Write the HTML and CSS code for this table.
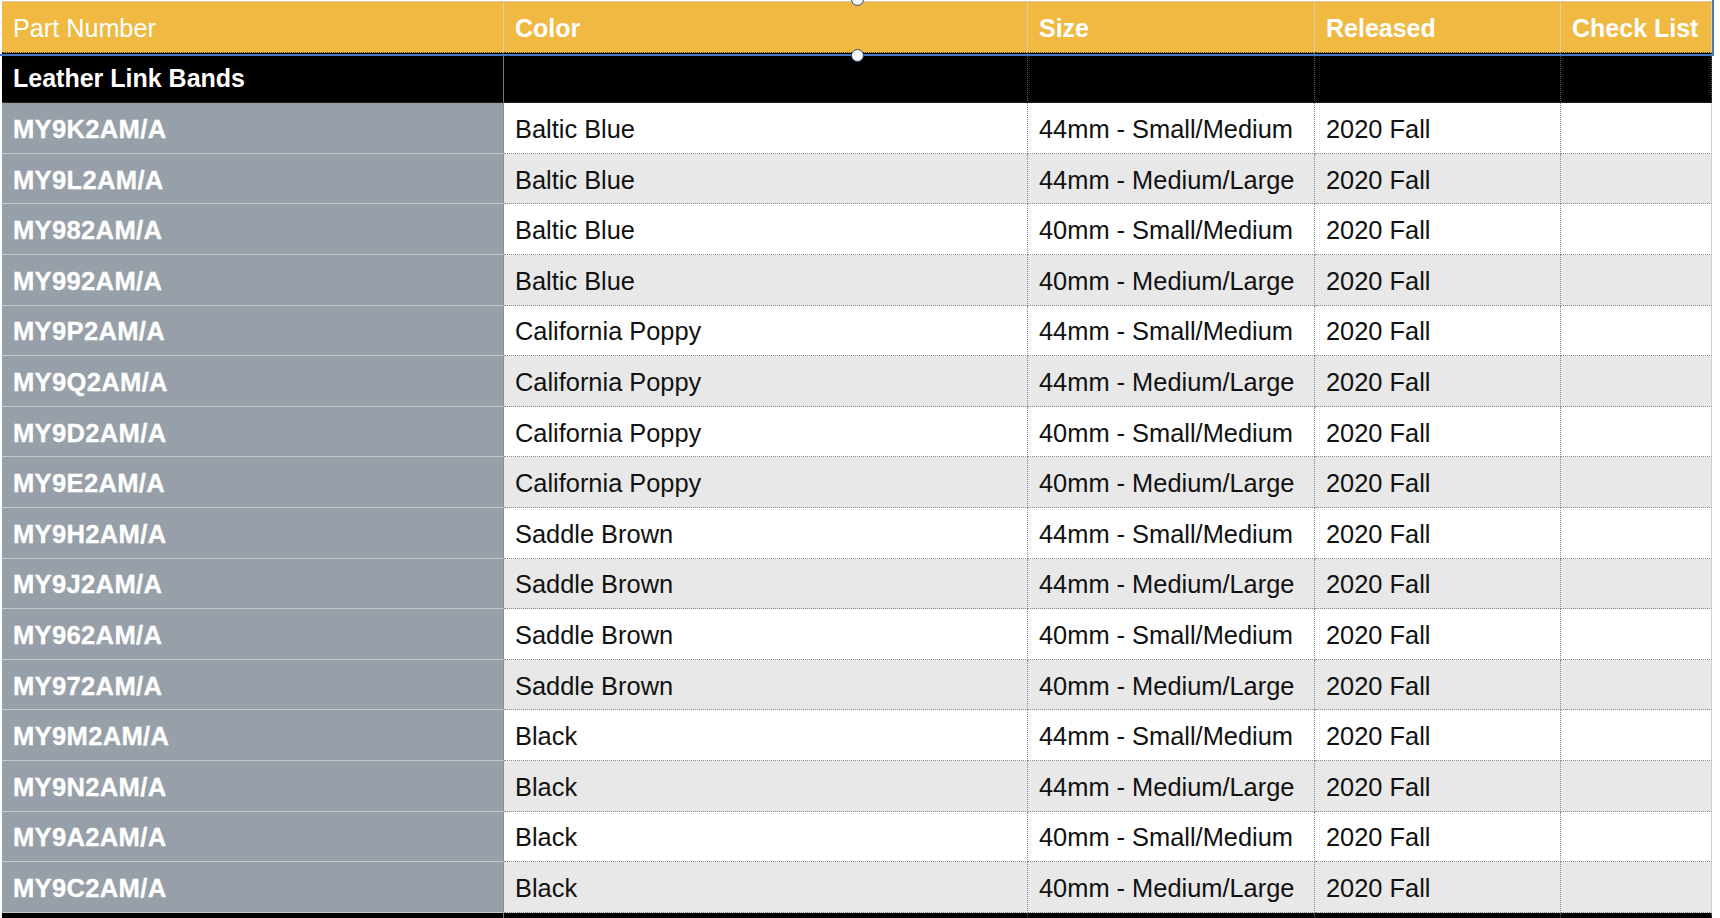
FILE: index.html
```html
<!DOCTYPE html>
<html>
<head>
<meta charset="utf-8">
<link rel="stylesheet" href="styles.css">
</head>
<body>
<div class="sheet">
  <div class="table">
    <div class="row head">
      <div class="cell first light">Part Number</div>
      <div class="cell">Color</div>
      <div class="cell">Size</div>
      <div class="cell">Released</div>
      <div class="cell">Check List</div>
    </div>
    <div class="row section">
      <div class="cell first">Leather Link Bands</div>
      <div class="cell"></div>
      <div class="cell"></div>
      <div class="cell"></div>
      <div class="cell"></div>
    </div>
    <div class="row odd"><div class="cell first">MY9K2AM/A</div><div class="cell">Baltic Blue</div><div class="cell">44mm - Small/Medium</div><div class="cell">2020 Fall</div><div class="cell"></div></div>
    <div class="row even"><div class="cell first">MY9L2AM/A</div><div class="cell">Baltic Blue</div><div class="cell">44mm - Medium/Large</div><div class="cell">2020 Fall</div><div class="cell"></div></div>
    <div class="row odd"><div class="cell first">MY982AM/A</div><div class="cell">Baltic Blue</div><div class="cell">40mm - Small/Medium</div><div class="cell">2020 Fall</div><div class="cell"></div></div>
    <div class="row even"><div class="cell first">MY992AM/A</div><div class="cell">Baltic Blue</div><div class="cell">40mm - Medium/Large</div><div class="cell">2020 Fall</div><div class="cell"></div></div>
    <div class="row odd"><div class="cell first">MY9P2AM/A</div><div class="cell">California Poppy</div><div class="cell">44mm - Small/Medium</div><div class="cell">2020 Fall</div><div class="cell"></div></div>
    <div class="row even"><div class="cell first">MY9Q2AM/A</div><div class="cell">California Poppy</div><div class="cell">44mm - Medium/Large</div><div class="cell">2020 Fall</div><div class="cell"></div></div>
    <div class="row odd"><div class="cell first">MY9D2AM/A</div><div class="cell">California Poppy</div><div class="cell">40mm - Small/Medium</div><div class="cell">2020 Fall</div><div class="cell"></div></div>
    <div class="row even"><div class="cell first">MY9E2AM/A</div><div class="cell">California Poppy</div><div class="cell">40mm - Medium/Large</div><div class="cell">2020 Fall</div><div class="cell"></div></div>
    <div class="row odd"><div class="cell first">MY9H2AM/A</div><div class="cell">Saddle Brown</div><div class="cell">44mm - Small/Medium</div><div class="cell">2020 Fall</div><div class="cell"></div></div>
    <div class="row even"><div class="cell first">MY9J2AM/A</div><div class="cell">Saddle Brown</div><div class="cell">44mm - Medium/Large</div><div class="cell">2020 Fall</div><div class="cell"></div></div>
    <div class="row odd"><div class="cell first">MY962AM/A</div><div class="cell">Saddle Brown</div><div class="cell">40mm - Small/Medium</div><div class="cell">2020 Fall</div><div class="cell"></div></div>
    <div class="row even"><div class="cell first">MY972AM/A</div><div class="cell">Saddle Brown</div><div class="cell">40mm - Medium/Large</div><div class="cell">2020 Fall</div><div class="cell"></div></div>
    <div class="row odd"><div class="cell first">MY9M2AM/A</div><div class="cell">Black</div><div class="cell">44mm - Small/Medium</div><div class="cell">2020 Fall</div><div class="cell"></div></div>
    <div class="row even"><div class="cell first">MY9N2AM/A</div><div class="cell">Black</div><div class="cell">44mm - Medium/Large</div><div class="cell">2020 Fall</div><div class="cell"></div></div>
    <div class="row odd"><div class="cell first">MY9A2AM/A</div><div class="cell">Black</div><div class="cell">40mm - Small/Medium</div><div class="cell">2020 Fall</div><div class="cell"></div></div>
    <div class="row even"><div class="cell first">MY9C2AM/A</div><div class="cell">Black</div><div class="cell">40mm - Medium/Large</div><div class="cell">2020 Fall</div><div class="cell"></div></div>
    <div class="row section">
      <div class="cell first"></div><div class="cell"></div><div class="cell"></div><div class="cell"></div><div class="cell"></div>
    </div>
  </div>
  <div class="selection">
    <span class="handle top"></span>
    <span class="handle bottom"></span>
  </div>
</div>
</body>
</html>
```

FILE: styles.css
```css
html, body {
  margin: 0;
  padding: 0;
  background: #ffffff;
  overflow: hidden;
}

body {
  font-family: "Liberation Sans", Arial, sans-serif;
  font-size: 25.4px;
  color: #111111;
}

.sheet {
  position: relative;
  height: 918px;
  padding: 1px 0 0 2px;
  box-sizing: border-box;
}

.table {
  width: 1710px;
  border-top: 1px solid #d9c9a3;
}

.row {
  display: grid;
  grid-template-columns: 502px 524px 287px 246px 151px;
  height: 50.6px;
  box-sizing: border-box;
}

.cell {
  display: flex;
  align-items: center;
  padding: 3px 0 0 11px;
  box-sizing: border-box;
  border-right: 1px dotted #8a8a8a;
  border-bottom: 1px dotted #8a8a8a;
  white-space: nowrap;
  overflow: hidden;
}

.cell.first {
  background: #979fa9;
  color: #ffffff;
  font-weight: bold;
  font-size: 25.6px;
  letter-spacing: 0.3px;
  -webkit-text-stroke: 0.3px #ffffff;
  border-right: 1px solid #8d8d8d;
  border-bottom: 1px solid #c3c8cf;
}

.cell:last-child {
  border-right: 1px solid #cfcfcf;
}

/* header */
.head .cell {
  background: #f0b941;
  color: #ffffff;
  font-weight: bold;
  font-size: 25px;
  letter-spacing: 0;
  -webkit-text-stroke: 0;
  border-right: 1px solid #d9cfb4;
  border-bottom: 1px dotted #3d3d3d;
}

.head .cell.light {
  font-weight: normal;
  font-size: 25.2px;
}

/* section rows */
.section .cell,
.section .cell.first {
  background: #000000;
  color: #ffffff;
  font-weight: bold;
  font-size: 25px;
  letter-spacing: 0;
  -webkit-text-stroke: 0;
  border-right: 1px dotted #5a5a5a;
  border-bottom: 1px dotted #3a3a3a;
}

.section .cell.first {
  border-right: 1px solid #7a7a7a;
}

.odd .cell {
  background: #ffffff;
}

.even .cell {
  background: #e8e8e8;
}

.odd .cell.first,
.even .cell.first {
  background: #979fa9;
}

/* selection overlay */
.selection {
  position: absolute;
  left: 0;
  top: -2px;
  width: 1714px;
  height: 58px;
  box-sizing: border-box;
  border-right: 2px solid #4a78c2;
  border-bottom: 2px solid #4a78c2;
  pointer-events: none;
}

.handle {
  position: absolute;
  left: 851px;
  width: 11px;
  height: 11px;
  border-radius: 50%;
  background: radial-gradient(circle at 45% 40%, #ffffff 0%, #f4f6fa 50%, #d8dce6 100%);
  border: 1.5px solid #3e4e7a;
}

.handle.top {
  top: -5px;
}

.handle.bottom {
  bottom: -8px;
}
```
